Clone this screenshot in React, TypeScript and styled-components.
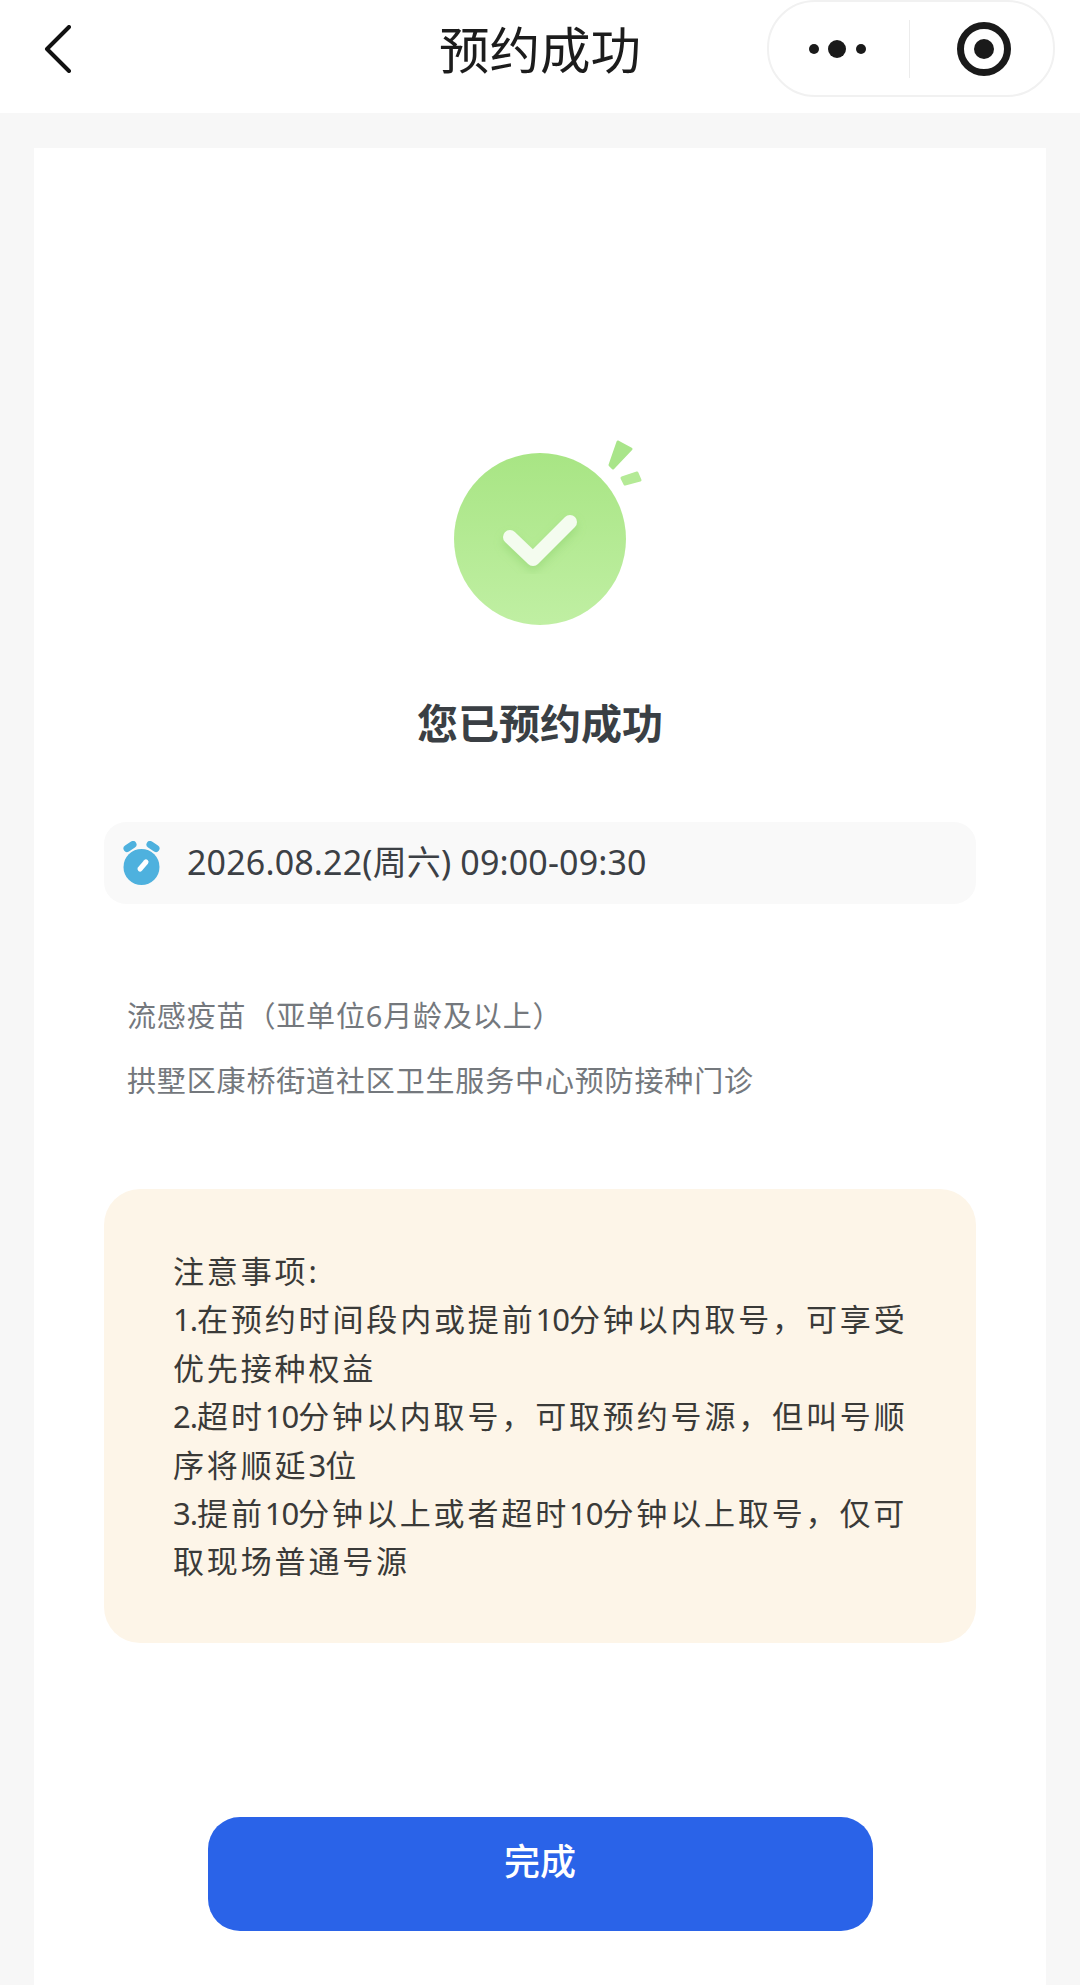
import React from "react";
import styled, { createGlobalStyle } from "styled-components";

const GlobalStyle = createGlobalStyle`
  html, body {
    margin: 0;
    padding: 0;
    background: #f7f7f7;
  }
  body {
    font-family: "Noto Sans", "Noto Sans CJK SC", sans-serif;
  }
`;

const Page = styled.div`
  width: 1080px;
  height: 1985px;
  overflow: hidden;
  display: flex;
  flex-direction: column;
  background: #f7f7f7;
`;

const NavBar = styled.header`
  height: 113px;
  flex: none;
  background: #ffffff;
  display: grid;
  grid-template-columns: 1fr auto 1fr;
`;

const BackButton = styled.div`
  padding: 25px 0 0 44px;
`;

const NavTitle = styled.h1`
  margin: 0;
  font-size: 50.5px;
  font-weight: 400;
  line-height: 100px;
  color: #1c1c1c;
`;

const CapsuleSlot = styled.div`
  display: flex;
  justify-content: flex-end;
  padding-right: 25px;
`;

const Capsule = styled.div`
  box-sizing: border-box;
  width: 288px;
  height: 97px;
  border: 2px solid #f1f1f1;
  border-radius: 48px;
  display: grid;
  grid-template-columns: 139px 2px 1fr;
  align-items: center;
  justify-items: center;

  svg:last-child {
    margin-left: 5px;
  }
`;

const CapsuleDivider = styled.div`
  width: 1px;
  height: 58px;
  background: #ececec;
`;

const Card = styled.main`
  flex: 1;
  margin: 35px 34px 0;
  background: #ffffff;
  display: flex;
  flex-direction: column;
  align-items: center;
`;

const SuccessIcon = styled.svg`
  margin-top: 272px;
  display: block;
`;

const Heading = styled.h2`
  margin: 55px 0 0;
  font-size: 41px;
  font-weight: 700;
  line-height: 56px;
  color: #3a3f44;
`;

const TimeBar = styled.div`
  box-sizing: border-box;
  width: 872px;
  height: 82px;
  margin-top: 71px;
  padding-left: 19px;
  border-radius: 22px;
  background: #f9f9f9;
  display: flex;
  align-items: center;
  gap: 27px;
`;

const TimeText = styled.span`
  padding-bottom: 5px;
  font-size: 34px;
  letter-spacing: 0.15px;
  color: #3c4045;
`;

const PlaceInfo = styled.div`
  width: 872px;
  margin-top: 92px;
  padding-left: 23px;
  box-sizing: border-box;
`;

const PlaceLine = styled.p`
  margin: 0 0 24.5px;
  font-size: 29px;
  line-height: 40px;
  letter-spacing: 0.85px;
  color: #74787d;
`;

const NoticeBox = styled.section`
  box-sizing: border-box;
  width: 872px;
  height: 454px;
  margin-top: 64px;
  padding: 58px 0 0 69px;
  border-radius: 36px;
  background: #fdf5e8;
`;

const NoticeLine = styled.div`
  font-size: 31px;
  line-height: 48.4px;
  letter-spacing: 2.85px;
  white-space: nowrap;
  color: #3a3a38;
`;

const NoticeDigits = styled.span`
  letter-spacing: -1px;
`;

const DoneButton = styled.button`
  width: 665px;
  height: 114px;
  margin-top: 174px;
  padding: 0 0 30px;
  border: none;
  border-radius: 32px;
  background: #2a63e8;
  color: #ffffff;
  font-family: inherit;
  font-size: 36px;
  font-weight: 500;
`;

const noticeLines = [
  "注意事项:",
  "1.在预约时间段内或提前10分钟以内取号，可享受",
  "优先接种权益",
  "2.超时10分钟以内取号，可取预约号源，但叫号顺",
  "序将顺延3位",
  "3.提前10分钟以上或者超时10分钟以上取号，仅可",
  "取现场普通号源",
];

const App: React.FC = () => {
  return (
    <>
      <GlobalStyle />
      <Page>
        <NavBar>
          <BackButton>
            <svg width="28" height="48" viewBox="0 0 28 48" fill="none">
              <path d="M25 2 L3 24 L25 46" stroke="#111" strokeWidth="4" strokeLinecap="round" strokeLinejoin="round" />
            </svg>
          </BackButton>
          <NavTitle>预约成功</NavTitle>
          <CapsuleSlot>
            <Capsule>
              <svg width="60" height="20" viewBox="0 0 60 20">
                <circle cx="5" cy="10" r="5" fill="#1a1a1a" />
                <circle cx="28" cy="10" r="9" fill="#1a1a1a" />
                <circle cx="52" cy="10" r="5" fill="#1a1a1a" />
              </svg>
              <CapsuleDivider />
              <svg width="56" height="56" viewBox="0 0 56 56" fill="none">
                <circle cx="28" cy="28" r="23.5" stroke="#1a1a1a" strokeWidth="7" />
                <circle cx="28" cy="28" r="10" fill="#1a1a1a" />
              </svg>
            </Capsule>
          </CapsuleSlot>
        </NavBar>
        <Card>
          <SuccessIcon width="240" height="220" viewBox="0 0 240 220" fill="none">
            <defs>
              <linearGradient id="disc" x1="0" y1="0" x2="0" y2="1">
                <stop offset="0" stopColor="#a8e584" />
                <stop offset="1" stopColor="#c0efa3" />
              </linearGradient>
              <filter id="tickShadow" x="-40%" y="-40%" width="180%" height="180%">
                <feDropShadow dx="0" dy="5" stdDeviation="5" floodColor="#7fc95f" floodOpacity="0.4" />
              </filter>
            </defs>
            <circle cx="120" cy="119" r="86" fill="url(#disc)" />
            <path
              d="M90 117 L113 139 L150 102"
              stroke="#f4fcef"
              strokeWidth="14"
              strokeLinecap="round"
              strokeLinejoin="round"
              filter="url(#tickShadow)"
            />
            <polygon
              points="198,22 211,29 193,48 190,45"
              fill="#a9e58a"
              stroke="#a9e58a"
              strokeWidth="3"
              strokeLinejoin="round"
            />
            <polygon
              points="217,53 220,60 205,64 202,58"
              fill="#b4ea96"
              stroke="#b4ea96"
              strokeWidth="3"
              strokeLinejoin="round"
            />
          </SuccessIcon>
          <Heading>您已预约成功</Heading>
          <TimeBar>
            <svg width="37" height="44" viewBox="0 0 37 44" fill="none">
              <circle cx="18.5" cy="26" r="18" fill="#4eb1de" />
              <path d="M4 7.5 L10 3.5" stroke="#4eb1de" strokeWidth="7" strokeLinecap="round" />
              <path d="M33 7.5 L27 3.5" stroke="#4eb1de" strokeWidth="7" strokeLinecap="round" />
              <path d="M17 28 L23 21" stroke="#ffffff" strokeWidth="5" strokeLinecap="round" />
            </svg>
            <TimeText>2026.08.22(周六) 09:00-09:30</TimeText>
          </TimeBar>
          <PlaceInfo>
            <PlaceLine>流感疫苗（亚单位6月龄及以上）</PlaceLine>
            <PlaceLine>拱墅区康桥街道社区卫生服务中心预防接种门诊</PlaceLine>
          </PlaceInfo>
          <NoticeBox>
            {noticeLines.map((line) => (
              <NoticeLine key={line}>
                {line.split(/([0-9.]+)/).map((part, i) =>
                  i % 2 === 1 ? <NoticeDigits key={i}>{part}</NoticeDigits> : part
                )}
              </NoticeLine>
            ))}
          </NoticeBox>
          <DoneButton>完成</DoneButton>
        </Card>
      </Page>
    </>
  );
};

export default App;
